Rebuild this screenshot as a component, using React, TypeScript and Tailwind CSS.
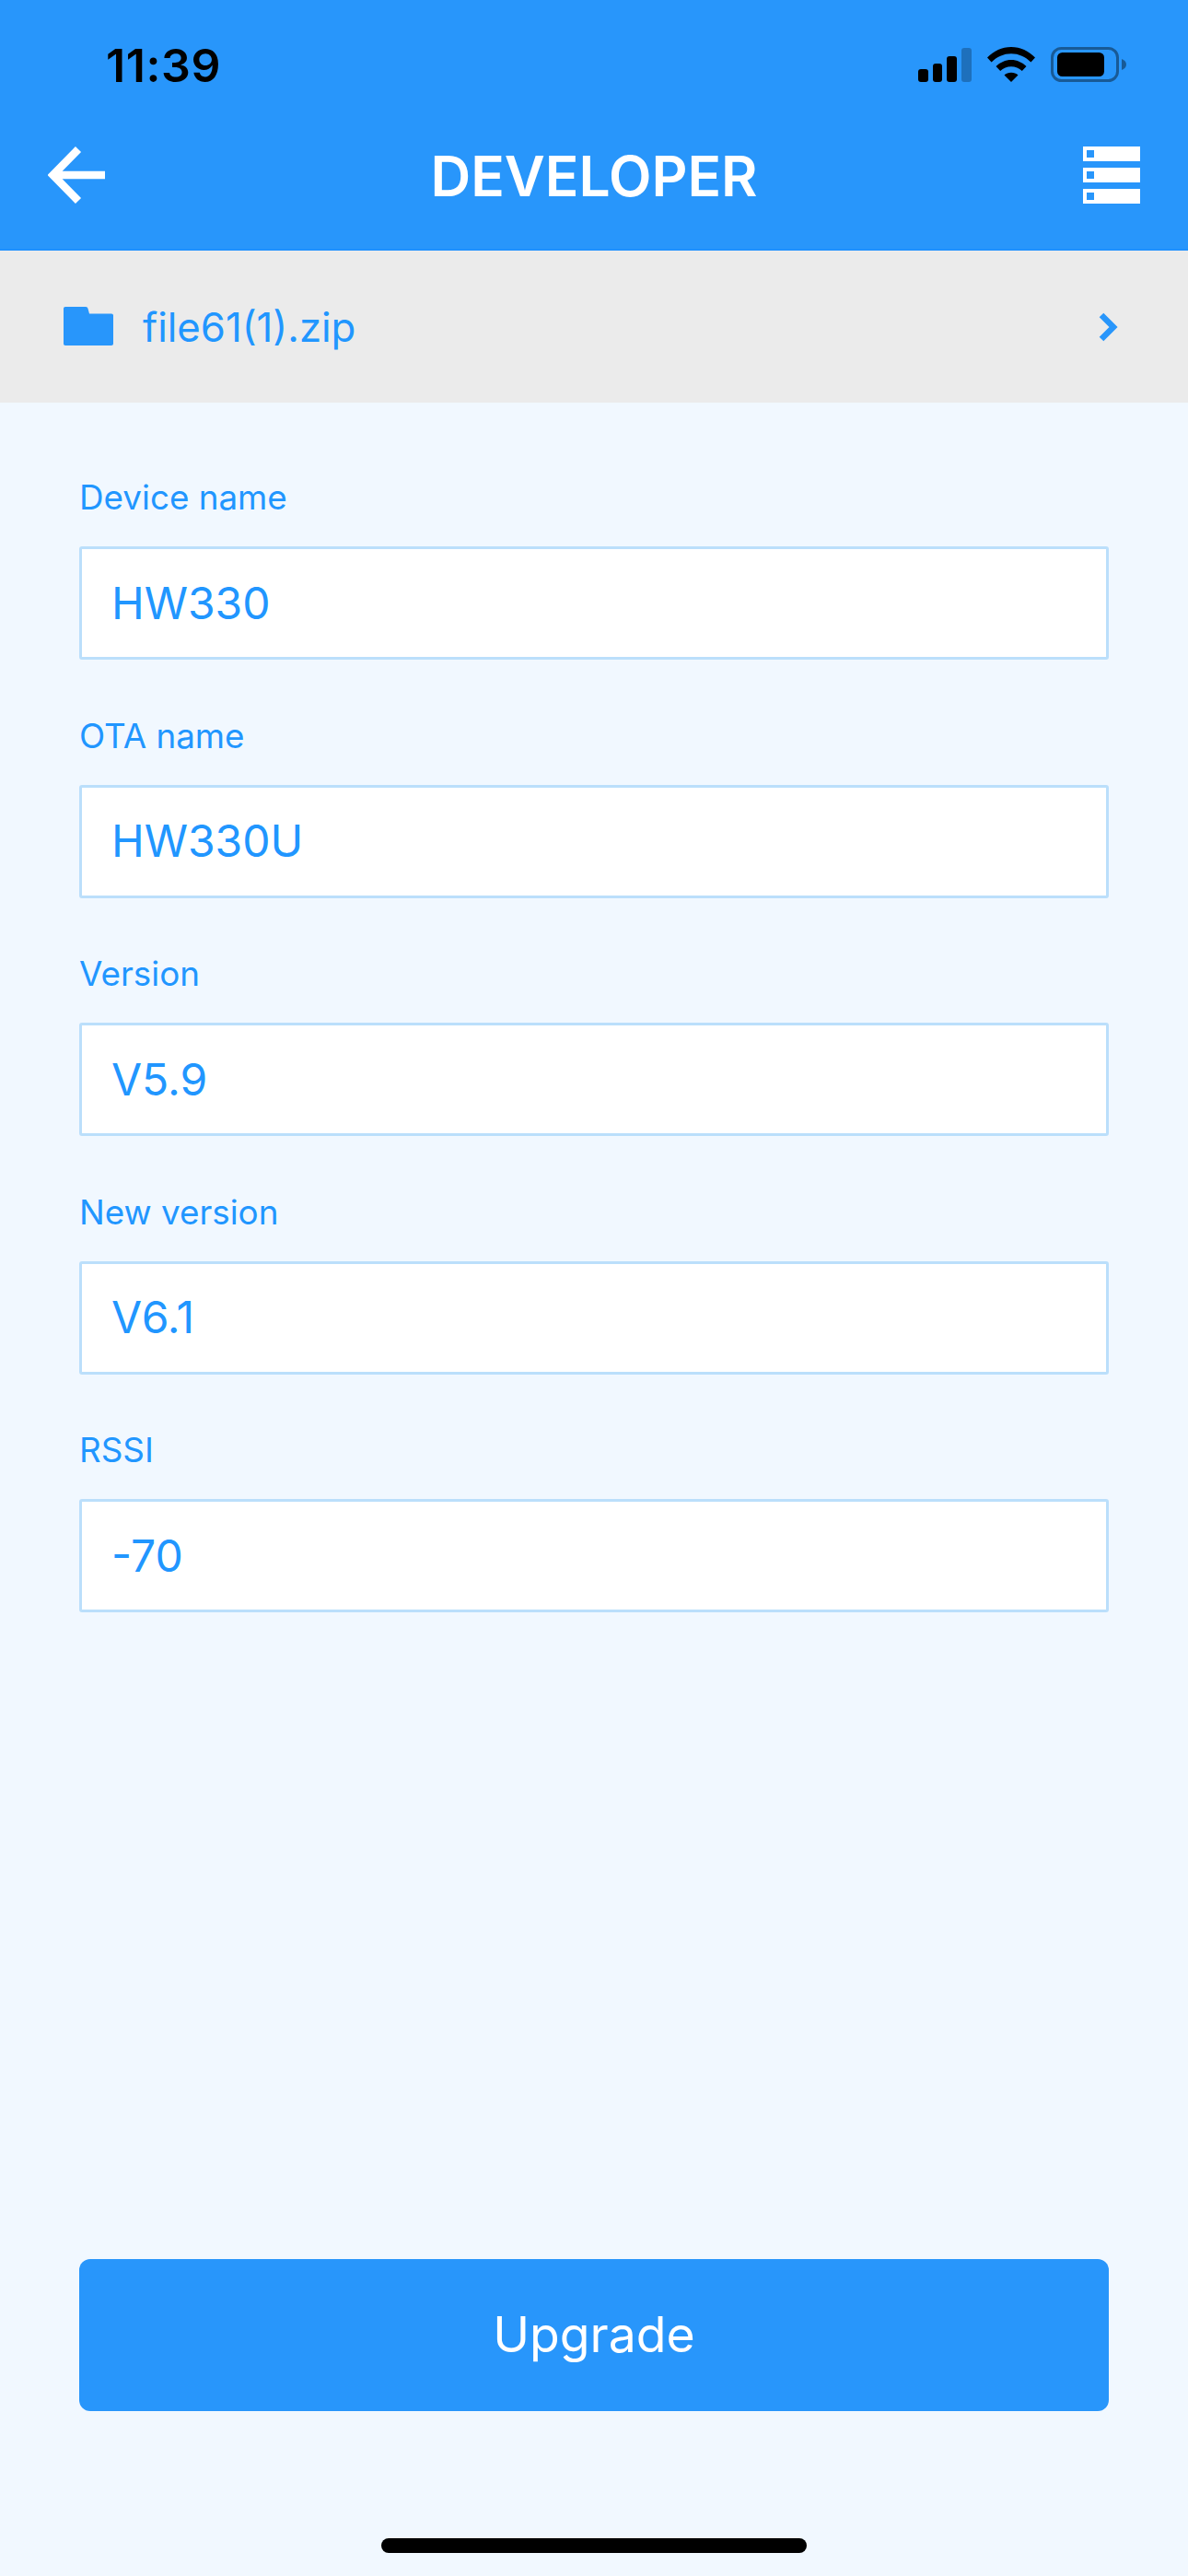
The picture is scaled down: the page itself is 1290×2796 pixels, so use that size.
const FONT = "font-['Inter','Noto_Sans',sans-serif]";

const fields = [
  { label: 'Device name', value: 'HW330' },
  { label: 'OTA name', value: 'HW330U' },
  { label: 'Version', value: 'V5.9' },
  { label: 'New version', value: 'V6.1' },
  { label: 'RSSI', value: '-70' },
];

// ---- status bar ----
function SignalIcon() {
  return (
    <svg width="58" height="37" viewBox="0 0 58 37" className="block">
      <rect x="0" y="23" width="11" height="14" rx="3" fill="#000" />
      <rect x="16" y="17" width="10" height="20" rx="3" fill="#000" />
      <rect x="31" y="9" width="11" height="28" rx="3" fill="#000" />
      <rect x="47" y="0" width="11" height="37" rx="3" fill="#000" fillOpacity="0.25" />
    </svg>
  );
}

function WifiIcon() {
  return (
    <svg width="52" height="38" viewBox="0 0 52 38" className="block">
      <path d="M0 11.5C7 4.4 16 0 26 0s19 4.4 26 11.5l-4.6 5C41.6 10.600 34.200 7.200 26 7.200S10.400 10.600 4.600 16.500z" fill="#000" />
      <path d="M9.500 21C14 16.700 19.700 14 26 14s12 2.700 16.500 7l-4.700 5C34.600 23 30.500 21.200 26 21.200S17.400 23 14.200 26z" fill="#000" />
      <path d="M18.500 30.500C20.500 28.800 23.100 27.800 26 27.800s5.500 1 7.500 2.700L26 38z" fill="#000" />
    </svg>
  );
}

function BatteryIcon() {
  return (
    <svg width="82" height="38" viewBox="0 0 82 38" className="block">
      <rect x="1.500" y="1.500" width="71" height="35" rx="10" fill="none" stroke="#000" strokeOpacity="0.4" strokeWidth="3" />
      <rect x="7" y="6" width="51" height="26" rx="5.500" fill="#000" />
      <path d="M77 13c2.800 1 5 3.200 5 6s-2.200 5-5 6z" fill="#000" fillOpacity="0.4" />
    </svg>
  );
}

// ---- navigation icons ----
function BackArrow() {
  return (
    <svg width="62" height="62" viewBox="0 0 62 62" className="block">
      <path d="M62 31H5M33 3L5.500 31 33 59" fill="none" stroke="#fff" strokeWidth="8.500" strokeLinejoin="miter" />
    </svg>
  );
}

function ServerIcon() {
  return (
    <svg width="62" height="62" viewBox="0 0 62 62" className="block">
      <path d="M0 0h62v16H0zM0 23h62v16H0zM0 46h62v16H0z" fill="#fff" />
      <path d="M4 4h8v8H4zM4 27h8v8H4zM4 50h8v8H4z" fill="#2896fb" />
    </svg>
  );
}

function FolderIcon() {
  return (
    <svg width="54" height="42" viewBox="0 0 54 42" className="block">
      <path d="M2 0h22c1.500 0 2.200.8 2.500 2L28 7.500h24c1.200 0 2 .8 2 2V40c0 1.200-.8 2-2 2H2c-1.200 0-2-.8-2-2V2C0 .8.800 0 2 0z" fill="#2896fb" />
    </svg>
  );
}

function ChevronIcon() {
  return (
    <svg width="22" height="32" viewBox="0 0 22 32" className="block">
      <path d="M3 3l13 13L3 29" fill="none" stroke="#2896fb" strokeWidth="6.500" />
    </svg>
  );
}

function Field({ label, value }: { label: string; value: string }) {
  return (
    <div>
      <p className="h-[44px] text-[36.800px] leading-[44px] text-[#2196ff]">{label}</p>
      <div className="mt-[31px] flex h-[123px] items-center rounded-[3px] border-[3px] border-[#bbdffb] bg-white pl-[32px] text-[48px] text-[#2196ff]">
        {value}
      </div>
    </div>
  );
}

export default function App() {
  return (
    <div className={`${FONT} flex h-[2796px] w-[1290px] flex-col bg-[#f1f8ff]`}>
      {/* ヘッダー */}
      <header className="h-[272px] border-b-2 border-[#1e90ff] bg-[#2896fb]">
        <div className="flex h-[89px] items-end justify-between pl-[115px] pr-[67px]">
          <span className="text-[50px] leading-[36px] font-semibold tracking-[0.6px] text-black">11:39</span>
          <div className="flex items-end gap-[17px]">
            <SignalIcon />
            <WifiIcon />
            <BatteryIcon />
          </div>
        </div>
        <div className="mt-[69px] flex items-center justify-between px-[52px]">
          <BackArrow />
          <h1 className="mt-[3px] text-[60.500px] leading-none font-semibold text-white">DEVELOPER</h1>
          <ServerIcon />
        </div>
      </header>

      {/* ファイル選択 */}
      <div className="flex h-[165px] items-center justify-between bg-[#ebebeb] pl-[69px] pr-[75px]">
        <div className="flex items-center gap-[32px]">
          <FolderIcon />
          <span className="pt-[2px] text-[43.700px] text-[#2196ff]">file61(1).zip</span>
        </div>
        <ChevronIcon />
      </div>

      <main className="flex flex-1 flex-col px-[86px] pt-[81px]">
        <div className="flex flex-col gap-[60.500px]">
          {fields.map(f => (
            <Field key={f.label} label={f.label} value={f.value} />
          ))}
        </div>
        <button className="mt-auto h-[165px] w-full rounded-[12px] bg-[#2896fb] text-[53.500px] text-white">
          Upgrade
        </button>
        <div className="mt-[138px] mb-[25px] flex justify-center">
          <div className="h-[16px] w-[462px] rounded-full bg-black" />
        </div>
      </main>
    </div>
  );
}
